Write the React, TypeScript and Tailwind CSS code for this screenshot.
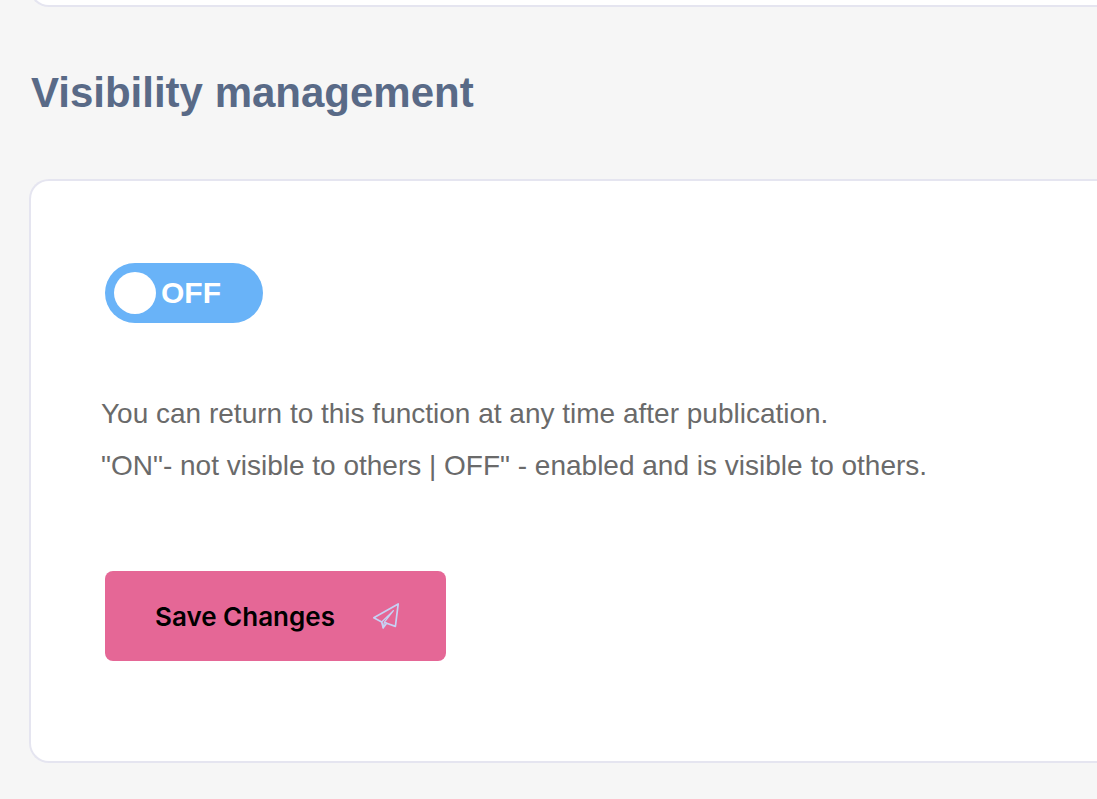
import { useState } from 'react'

function SendIcon() {
  return (
    <svg
      className="h-7 w-7"
      viewBox="0 0 28 28"
      fill="none"
      stroke="#c6d2f5"
      strokeWidth="1.7"
      strokeLinejoin="round"
      strokeLinecap="round"
      aria-hidden="true"
    >
      <path d="M1.8 15.8 26.2 1.9 23.4 24.4 14.6 21.2 11.2 25.8 9.7 20Z" />
      <path d="M9.7 20 21.4 8.6 12.4 20.2 11.2 25.8M12.4 20.2 14.6 21.2" strokeWidth="1.3" />
    </svg>
  )
}

interface VisibilityToggleProps {
  checked: boolean
  onChange: (checked: boolean) => void
}

function VisibilityToggle({ checked, onChange }: VisibilityToggleProps) {
  return (
    <label
      className={`flex h-[60px] w-[158px] cursor-pointer items-center gap-[5px] rounded-full bg-[#69b3f8] px-[9px] ${
        checked ? 'flex-row-reverse' : ''
      }`}
    >
      <input
        type="checkbox"
        role="switch"
        className="h-[42px] w-[42px] shrink-0 cursor-pointer appearance-none rounded-full bg-white"
        checked={checked}
        onChange={e => onChange(e.target.checked)}
      />
      <span className="text-[30px] leading-[36px] font-bold text-white">{checked ? 'ON' : 'OFF'}</span>
    </label>
  )
}

export default function App() {
  const [hidden, setHidden] = useState(false)

  return (
    <div className="min-h-screen overflow-hidden bg-[#f6f6f6] pl-[29px] font-['Liberation_Sans',Arial,sans-serif]">
      {/* Tail of the previous section */}
      <div className="flex h-[7px] items-end overflow-hidden">
        <div className="h-12 flex-1 rounded-bl-[20px] border-b-2 border-l-2 border-[#e5e5f0] bg-white" />
      </div>

      <h2 className="mt-[62px] pl-0.5 text-[42px] leading-[48px] font-bold text-[#596a87]">
        Visibility management
      </h2>

      <section className="mt-[62px] rounded-l-[20px] border-2 border-r-0 border-[#e5e5f0] bg-white pt-[82px] pb-[100px] pl-[70px]">
        <div className="pl-1">
          <VisibilityToggle checked={hidden} onChange={setHidden} />
        </div>

        <div className="mt-[65px] text-[28px] leading-[52px] text-[#6a6a6a]">
          <p>You can return to this function at any time after publication.</p>
          <p>"ON"- not visible to others | OFF" - enabled and is visible to others.</p>
        </div>

        <div className="mt-[79px] pl-1">
          <button
            type="button"
            className="flex h-[90px] w-[341px] items-center justify-between rounded-lg bg-[#e56796] pr-[46px] pl-[50px] font-['Inter',sans-serif] text-[26px] font-semibold text-black"
          >
            Save Changes
            <SendIcon />
          </button>
        </div>
      </section>
    </div>
  )
}
